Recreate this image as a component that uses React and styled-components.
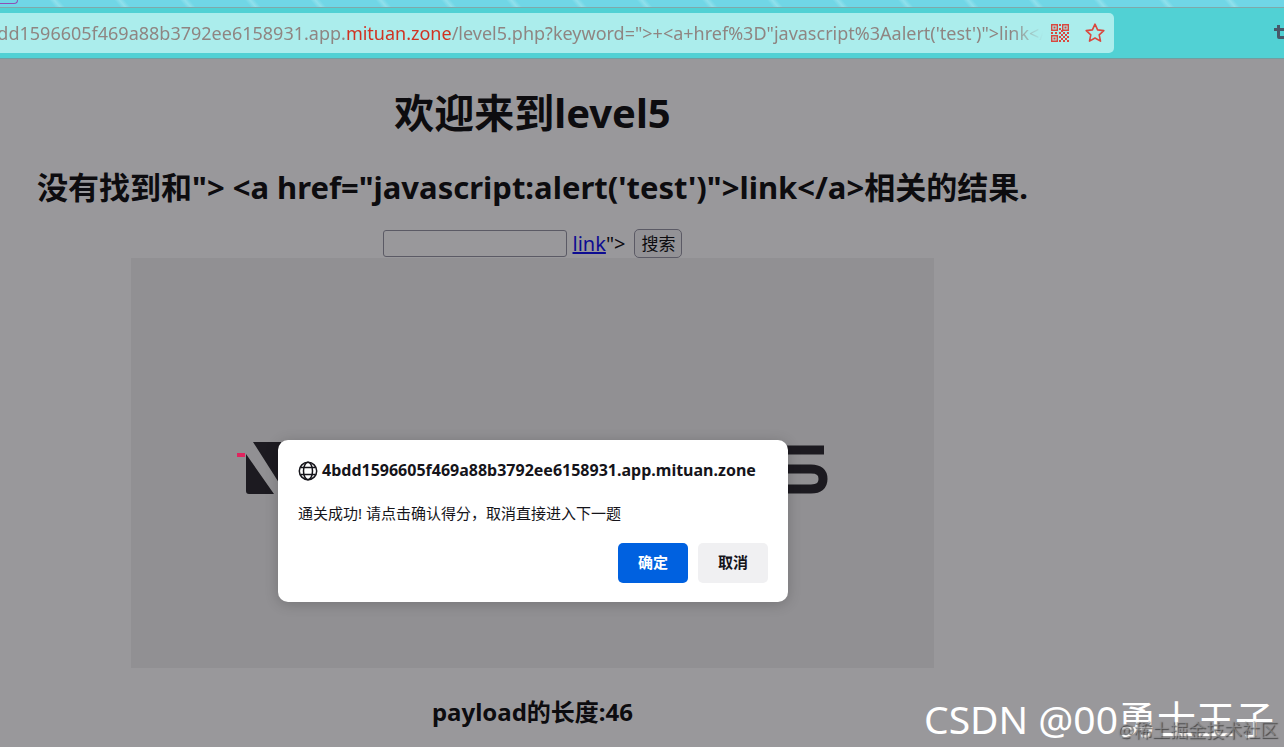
import React, { useState } from 'react'
import styled, { createGlobalStyle } from 'styled-components'

const host = "4bdd1596605f469a88b3792ee6158931.app.";
const domain = "mituan.zone";
const path = "/level5.php?keyword=\">+<a+href%3D\"javascript%3Aalert('test')\">link";
const payload = "\"> <a href=\"javascript:alert('test')\">link</a>";

// loose modules between the three finder squares of the qr icon
const qrModules = [
  [8, 0], [8, 4], [10, 6], [0, 8], [4, 8], [8, 8], [12, 8], [16, 8],
  [10, 10], [14, 10], [8, 12], [12, 12], [16, 12], [10, 14], [14, 14], [8, 16], [12, 16], [16, 16],
];

function QrIcon() {
  return (
    <svg width="18" height="18" viewBox="0 0 18 18" fill="#d9483f">
      <path fillRule="evenodd" d="M0 0h7v7H0zM1.4 1.4v4.2h4.2V1.400zM11 0h7v7h-7zM12.400 1.400v4.200h4.200V1.400zM0 11h7v7H0zM1.400 12.400v4.200h4.200v-4.200z" />
      <path d="M2.500 2.500h2v2h-2zM13.500 2.500h2v2h-2zM2.500 13.500h2v2h-2z" />
      {qrModules.map(([x, y]) => <rect key={`${x}-${y}`} x={x} y={y} width="2" height="2" />)}
    </svg>
  )
}

function StarIcon() {
  return (
    <svg width="20" height="20" viewBox="0 0 20 20" fill="none" stroke="#d9483f" strokeWidth="1.600" strokeLinejoin="round">
      <path d="M10 1.200l2.600 5.700 6.200.7-4.600 4.200 1.300 6.300-5.500-3.100-5.500 3.100 1.300-6.300L1.200 7.600l6.200-.7z" />
    </svg>
  )
}

function ToolIcon() {
  return (
    <svg width="10" height="18" viewBox="0 0 10 18" fill="#485868">
      <path d="M3 1h3v3h4v3H6v5h4v3H5q-2 0-2-2V7H0V4h3z" />
    </svg>
  )
}

function GlobeIcon() {
  return (
    <svg width="20" height="20" viewBox="0 0 20 20" fill="none" stroke="#15141a" strokeWidth="1.500">
      <circle cx="10" cy="10" r="8.700" />
      <ellipse cx="10" cy="10" rx="4.500" ry="8.700" />
      <path d="M2.500 6.500h15M2.500 13.500h15" />
    </svg>
  )
}

function LevelBanner() {
  return (
    <Banner viewBox="0 0 803 410" role="img" aria-label="level banner">
      <rect width="803" height="410" fill="#f1f1f1" />
      <path d="M122 184h28v44zM115 196l28 40h-25q-3 0-3-3z" fill="#1c1b1f" />
      <path d="M640 192h53M640 211h40q12 0 12 10t-12 10h-40" fill="none" stroke="#1c1b1f" strokeWidth="9" />
    </Banner>
  )
}

function App() {
  const [keyword, setKeyword] = useState('');
  const [open, setOpen] = useState(true);

  return (
    <>
      <GlobalStyle />
      <Wrap>
        <TabStrip><ActiveTab /></TabStrip>
        <NavBar>
          <AddressBar>
            <Url role="textbox" aria-label="address">
              <span>{host}<strong>{domain}</strong>{path}&lt;/a&gt;</span>
            </Url>
            <IconButton aria-label="qr code"><QrIcon /></IconButton>
            <IconButton aria-label="bookmark"><StarIcon /></IconButton>
          </AddressBar>
          <IconButton aria-label="tools"><ToolIcon /></IconButton>
        </NavBar>
        <Page>
          <Content>
            <Title>欢迎来到level5</Title>
            <Result>没有找到和{payload}相关的结果.</Result>
            <SearchForm onSubmit={(e) => e.preventDefault()}>
              <input aria-label="keyword" value={keyword} onChange={(e) => setKeyword(e.target.value)} />
              <span><a href="#test">link</a>"&gt;</span>
              <button>搜索</button>
            </SearchForm>
            <LevelBanner />
            <PayloadLength>payload的长度:46</PayloadLength>
          </Content>
          {
            open &&
            <Backdrop>
              <Dialog role="dialog" aria-labelledby="origin">
                <Origin id="origin"><GlobeIcon />{host}{domain}</Origin>
                <Message>通关成功! 请点击确认得分，取消直接进入下一题</Message>
                <BtnGroup>
                  <DialogButton $primary onClick={() => setOpen(false)}>确定</DialogButton>
                  <DialogButton onClick={() => setOpen(false)}>取消</DialogButton>
                </BtnGroup>
              </Dialog>
            </Backdrop>
          }
          <PinkMark />
          <AuthorMark>CSDN @00勇士王子</AuthorMark>
          <SiteMark>@稀土掘金技术社区</SiteMark>
        </Page>
      </Wrap>
    </>
  )
}

export default App

const GlobalStyle = createGlobalStyle`
  * {
    box-sizing: border-box;
  }
  body {
    margin: 0;
    font-family: "Noto Sans", "Noto Sans CJK SC", sans-serif;
    color: #000;
  }
  button, input {
    font-family: inherit;
  }
`
const Wrap = styled.div`
  display: flex;
  flex-direction: column;
  min-height: 100vh;
  overflow: hidden;
`
const TabStrip = styled.div`
  height: 8px;
  background: repeating-linear-gradient(50deg, #70d6e6 0 42px, #8fe0ec 46px, #70d6e6 50px);
  border-bottom: 1px solid #7fa9ab;
`
const ActiveTab = styled.div`
  width: 18px;
  height: 4px;
  border: 1px solid #8f4fb4;
  border-width: 0 1px 1px 0;
  border-radius: 0 0 4px 0;
`
const NavBar = styled.div`
  display: flex;
  justify-content: space-between;
  align-items: center;
  height: 51px;
  background-color: #51d1d4;
  border-bottom: 1px solid #6f9fa2;
`
const AddressBar = styled.div`
  display: flex;
  align-items: center;
  gap: 16px;
  width: 1114px;
  height: 40px;
  padding-right: 9px;
  background-color: #abedec;
  border-radius: 0 5px 5px 0;
`
const Url = styled.div`
  display: flex;
  flex: 1;
  min-width: 0;
  margin-right: -8px;
  overflow: hidden;
  white-space: nowrap;
  font-size: 18px;
  line-height: 24px;
  color: #8f8582;
  mask-image: linear-gradient(to left, transparent, #000 32px);
  & span {
    margin-left: -24px;
  }
  & strong {
    font-weight: 400;
    color: #d03322;
  }
`
const IconButton = styled.button`
  display: flex;
  padding: 0;
  border: 0;
  background: none;
  cursor: pointer;
`
const Page = styled.main`
  position: relative;
  flex: 1;
  background-color: #fff;
`
const Content = styled.div`
  display: flex;
  flex-direction: column;
  align-items: center;
  padding-right: 219px;
`
const Title = styled.h1`
  margin: 24px 0 0;
  font-size: 40px;
  line-height: 60px;
`
const Result = styled.h2`
  margin: 22px 0 0;
  font-size: 31px;
  line-height: 44px;
  white-space: nowrap;
`
const SearchForm = styled.form`
  display: flex;
  align-items: center;
  gap: 6px;
  margin-top: 20px;
  height: 29px;
  font-size: 20px;
  & input {
    width: 184px;
    height: 27px;
    border: 1px solid #8f8f9d;
    border-radius: 3px;
  }
  & span {
    margin-right: 3px;
  }
  & a {
    color: #0000ee;
  }
  & button {
    height: 29px;
    padding: 0 6px;
    font-size: 17px;
    line-height: 24px;
    border: 1px solid #8f8f9d;
    border-radius: 5px;
    background-color: #f4f4f6;
  }
`
const Banner = styled.svg`
  display: block;
  width: 803px;
  height: 410px;
`
const PayloadLength = styled.h3`
  margin: 26px 0 0;
  font-size: 24px;
  line-height: 36px;
`
const Backdrop = styled.div`
  position: absolute;
  inset: 0;
  display: flex;
  justify-content: center;
  align-items: flex-start;
  padding: 381px 218px 0 0;
  background-color: rgba(28, 27, 34, 0.45);
`
const Dialog = styled.div`
  display: flex;
  flex-direction: column;
  width: 510px;
  padding: 20px 20px 19px;
  background-color: #fff;
  border-radius: 10px;
  box-shadow: 0 2px 14px rgba(0, 0, 0, 0.2);
  color: #15141a;
`
const Origin = styled.div`
  display: flex;
  align-items: center;
  gap: 4px;
  font-size: 16px;
  font-weight: 700;
  line-height: 21px;
`
const Message = styled.p`
  margin: 22px 0 0;
  font-size: 15px;
  line-height: 21px;
`
const BtnGroup = styled.div`
  display: flex;
  justify-content: flex-end;
  gap: 10px;
  margin-top: 19px;
`
const DialogButton = styled.button`
  width: 70px;
  height: 40px;
  padding: 0 0 3px;
  font-size: 15px;
  font-weight: 700;
  border: 0;
  border-radius: 5px;
  cursor: pointer;
  background-color: ${({ $primary }) => ($primary ? '#0061e0' : '#f0f0f2')};
  color: ${({ $primary }) => ($primary ? '#fff' : '#15141a')};
`
const PinkMark = styled.div`
  position: absolute;
  top: 394px;
  left: 237px;
  width: 8px;
  height: 4px;
  background-color: #e0245e;
`
const AuthorMark = styled.div`
  position: absolute;
  right: 10px;
  bottom: 0;
  font-size: 39px;
  line-height: 56px;
  color: #fff;
`
const SiteMark = styled.div`
  position: absolute;
  right: 6px;
  bottom: 4px;
  font-size: 18px;
  line-height: 26px;
  color: rgba(150, 150, 152, 0.6);
  text-shadow: 1px 1px 1px rgba(40, 40, 40, 0.7);
`
